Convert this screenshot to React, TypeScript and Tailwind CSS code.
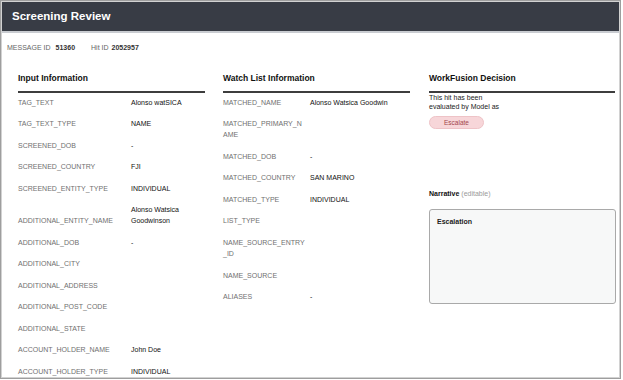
import React from "react";

const font = { fontFamily: '"Liberation Sans", Arial, sans-serif' };

type Row = { label: string; value?: string };

const inputRows: Row[] = [
  { label: "TAG_TEXT", value: "Alonso watSICA" },
  { label: "TAG_TEXT_TYPE", value: "NAME" },
  { label: "SCREENED_DOB", value: "-" },
  { label: "SCREENED_COUNTRY", value: "FJI" },
  { label: "SCREENED_ENTITY_TYPE", value: "INDIVIDUAL" },
  { label: "ADDITIONAL_ENTITY_NAME", value: "Alonso Watsica Goodwinson" },
  { label: "ADDITIONAL_DOB", value: "-" },
  { label: "ADDITIONAL_CITY" },
  { label: "ADDITIONAL_ADDRESS" },
  { label: "ADDITIONAL_POST_CODE" },
  { label: "ADDITIONAL_STATE" },
  { label: "ACCOUNT_HOLDER_NAME", value: "John Doe" },
  { label: "ACCOUNT_HOLDER_TYPE", value: "INDIVIDUAL" },
];

const watchRows: Row[] = [
  { label: "MATCHED_NAME", value: "Alonso Watsica Goodwin" },
  { label: "MATCHED_PRIMARY_NAME" },
  { label: "MATCHED_DOB", value: "-" },
  { label: "MATCHED_COUNTRY", value: "SAN MARINO" },
  { label: "MATCHED_TYPE", value: "INDIVIDUAL" },
  { label: "LIST_TYPE" },
  { label: "NAME_SOURCE_ENTRY_ID" },
  { label: "NAME_SOURCE" },
  { label: "ALIASES", value: "-" },
];

function Heading({ children }: { children: React.ReactNode }) {
  return (
    <div className="border-b-2 border-[#3d3d3d] pb-[7.5px] text-[8.5px] font-bold leading-[10px] text-[#111]">
      {children}
    </div>
  );
}

function Table({ rows, labelW }: { rows: Row[]; labelW: string }) {
  return (
    <div className="flex flex-col">
      {rows.map((r) => (
        <div key={r.label} className="flex items-end pt-[4px] pb-[6.25px] text-[7px] leading-[11.25px]">
          <div className={`${labelW} shrink-0 break-all pr-[4px] text-[#707070]`}>{r.label}</div>
          <div className="min-w-0 flex-1 text-[#111]">{r.value ?? ""}</div>
        </div>
      ))}
    </div>
  );
}

export default function App() {
  return (
    <div className="h-[380px] w-[623px] overflow-hidden bg-white" style={font}>
      <div className="flex h-[379px] w-[621px] flex-col border border-[#9e9e9e]">
        <div className="flex h-full flex-col border border-[#d2d2d2]">
          <div className="flex h-[31px] shrink-0 items-center border-b-2 border-[#c9ccd1] bg-[#383c45] px-[10px]">
            <span className="text-[11.5px] font-bold text-white">Screening Review</span>
          </div>
          <div className="mt-[10px] flex items-center pl-[5px] text-[7px] leading-[10px]">
            <span className="text-[#666]">MESSAGE ID</span>
            <span className="ml-[5px] font-bold text-[#333]">51360</span>
            <span className="ml-[16px] text-[#666]">Hit ID</span>
            <span className="ml-[3px] font-bold text-[#333]">2052957</span>
          </div>
          <div className="mt-[20px] flex gap-[18px] pl-[16px]">
            <div className="w-[187px]">
              <Heading>Input Information</Heading>
              <Table rows={inputRows} labelW="w-[113px]" />
            </div>
            <div className="w-[187px]">
              <Heading>Watch List Information</Heading>
              <Table rows={watchRows} labelW="w-[87px]" />
            </div>
            <div className="ml-px w-[186px]">
              <Heading>WorkFusion Decision</Heading>
              <div className="w-[76px] text-[7px] leading-[9px] text-[#222]">
                This hit has been evaluated by Model as
              </div>
              <div className="mt-[5.5px] flex h-[13px] w-[55px] items-center justify-center rounded-full border border-[#eec3c7] bg-[#f7d6d9] text-[6.5px] text-[#a3464e]">
                Escalate
              </div>
              <div className="mt-[60px] text-[7px] leading-[10px]">
                <span className="font-bold text-[#111]">Narrative</span>{" "}
                <span className="text-[#9a9a9a]">(editable)</span>
              </div>
              <div className="mt-[10px] h-[95px] w-[187px] rounded-[3px] border border-[#a9a9a9] bg-[#f7f8f8] px-[7px] pt-[7px] text-[7px] font-bold leading-[10px] text-[#222]">
                Escalation
              </div>
            </div>
          </div>
        </div>
      </div>
    </div>
  );
}
